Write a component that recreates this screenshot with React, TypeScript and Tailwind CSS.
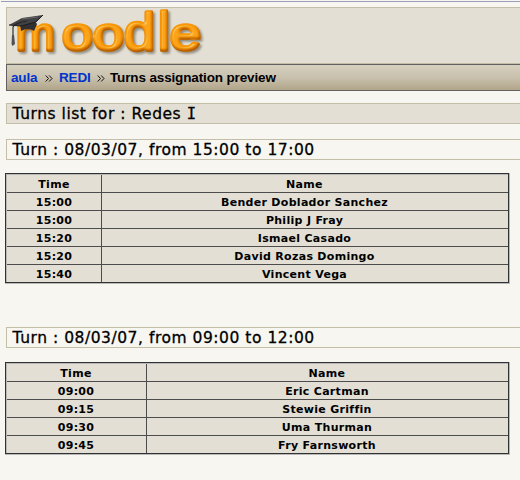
type Row = [string, string];

const firstTurn: Row[] = [
  ["15:00", "Bender Doblador Sanchez"],
  ["15:00", "Philip J Fray"],
  ["15:20", "Ismael Casado"],
  ["15:20", "David Rozas Domingo"],
  ["15:40", "Vincent Vega"],
];

const secondTurn: Row[] = [
  ["09:00", "Eric Cartman"],
  ["09:15", "Stewie Griffin"],
  ["09:30", "Uma Thurman"],
  ["09:45", "Fry Farnsworth"],
];

// Each letter: character, left x, width, font size
const letters: [string, number, number, number][] = [
  ["m", 9, 39, 46],
  ["o", 55, 31, 46],
  ["o", 86, 31, 46],
  ["d", 117, 31, 52],
  ["l", 151, 12, 53],
  ["e", 163, 31, 46],
];

function Logo() {
  return (
    <svg width="210" height="55" viewBox="0 0 210 55" className="block overflow-visible font-['Liberation_Sans',sans-serif]">
      <defs>
        <filter id="bevel" filterUnits="userSpaceOnUse" x="0" y="-4" width="210" height="62" colorInterpolationFilters="sRGB">
          <feGaussianBlur in="SourceAlpha" stdDeviation="1.2" result="blur" />
          <feOffset in="blur" dx="2" dy="2" result="drop" />
          <feFlood floodColor="#6f6b60" floodOpacity="0.7" />
          <feComposite in2="drop" operator="in" result="shadow" />
          <feOffset in="blur" dx="-1.3" dy="-1.6" result="up" />
          <feFlood floodColor="#a85400" floodOpacity="1" />
          <feComposite in2="up" operator="out" result="darkside" />
          <feComposite in="darkside" in2="SourceAlpha" operator="in" result="inner" />
          <feSpecularLighting in="blur" surfaceScale="3" specularConstant="0.75" specularExponent="22" lightingColor="#ffe08a" result="spec">
            <feDistantLight azimuth="225" elevation="48" />
          </feSpecularLighting>
          <feComposite in="spec" in2="SourceAlpha" operator="in" result="shine" />
          <feMerge>
            <feMergeNode in="shadow" />
            <feMergeNode in="SourceGraphic" />
            <feMergeNode in="inner" />
            <feMergeNode in="shine" />
          </feMerge>
        </filter>
      </defs>
      <g fill="#fb9806" stroke="#fb9806" strokeWidth="3.4" strokeLinejoin="round" filter="url(#bevel)">
        {letters.map(([c, x, w, size], i) => (
          <text key={i} x={x} y={42} fontSize={size} textLength={w} lengthAdjust="spacingAndGlyphs">
            {c}
          </text>
        ))}
      </g>
      <path d="M13 17 L14 23 Q21 19 27 23 L30 16 L27 12Z" fill="#303033" />
      <path d="M2 17 L15 10 L36 7 L29 14 L14 18Z" fill="#414144" />
      <path d="M2 17 L14 18 L29 14 L36 7" fill="none" stroke="#1d1d20" />
      <path d="M15 11 L31 9" stroke="#77777a" strokeWidth="0.7" />
      <path d="M20 13 Q8 15 6 19 V28" fill="none" stroke="#242426" strokeWidth="1.1" />
      <path d="M5 27 L4.5 36 L5.5 38 L8 36 L7 27Z" fill="#515155" />
    </svg>
  );
}

function Chevrons() {
  return (
    <svg width="8" height="7" viewBox="0 0 8 7" className="block" fill="none" stroke="#111111" strokeWidth="1">
      <path d="M0.7 0.5 L3.5 3.5 L0.7 6.5 M4.2 0.5 L7 3.5 L4.2 6.5" />
    </svg>
  );
}

function Heading({ children, filled = false }: { children: React.ReactNode; filled?: boolean }) {
  return (
    <h2
      className={`ml-[6px] h-[21px] border border-r-0 border-[#c4bda8] pl-[5.5px] text-[15.5px] leading-[20px] tracking-[0.53px] whitespace-nowrap [-webkit-text-stroke:0.3px_black] ${
        filled ? "bg-[#e3dfd4]" : ""
      }`}
    >
      {children}
    </h2>
  );
}

function TurnTable({ rows, wide = false }: { rows: Row[]; wide?: boolean }) {
  const all: Row[] = [["Time", "Name"], ...rows];
  return (
    <div className="ml-[5px] w-[505px] border-r border-b border-[#b9b8b7]">
      <div className="border border-[#303334]">
        <div className="border-t border-l border-[#b9b8b7] bg-[#e3dfd4] text-[11px] leading-[17px] font-bold">
          {all.map(([time, name], i) => (
            <div
              key={i}
              className={`grid text-center ${wide ? "grid-cols-[140px_1fr]" : "grid-cols-[95px_1fr]"} ${
                i > 0 ? "h-[18px] border-t border-[#4c4c4c]" : "h-[17px]"
              }`}
            >
              <div className={`h-[17px] border-r border-[#4c4c4c] pt-px tracking-[0.3px] ${wide ? "pr-px" : ""}`}>{time}</div>
              <div className="h-[17px] pt-px pr-[1px] tracking-[0.3px]">{name}</div>
            </div>
          ))}
        </div>
      </div>
    </div>
  );
}

export default function App() {
  return (
    <main className="h-[480px] w-[520px] overflow-hidden bg-[#f7f6f1] pt-px font-['DejaVu_Sans',sans-serif] text-black">
      <div className="ml-px h-px bg-[#9c9cbd]" />
      <header className="mt-[5px] ml-[6px] h-[57px] border border-r-0 border-[#c4bda8] bg-[#e3dfd4]">
        <Logo />
      </header>
      <nav className="ml-[6px] flex h-[27px] items-center border border-r-0 border-[#62615f] bg-linear-to-b from-[#d6d0c0] via-[#c9c1ae] to-[#b1a589] pt-[2px] pl-[4px] font-['Liberation_Sans',sans-serif] text-[13.5px] font-bold tracking-[-0.14px] whitespace-nowrap">
        <a className="w-[34px] text-[#0033cc]">aula</a>
        <Chevrons />
        <a className="ml-[6px] w-[38px] text-[#0033cc]">REDI</a>
        <Chevrons />
        <span className="ml-[5px]">Turns assignation preview</span>
      </nav>
      <div className="mt-[12px]">
        <Heading filled>
          Turns list for : Redes <span className="font-['DejaVu_Sans_Mono',monospace]">I</span>
        </Heading>
      </div>
      <section className="mt-[15px]">
        <Heading>Turn : 08/03/07, from 15:00 to 17:00</Heading>
        <div className="mt-[13px]">
          <TurnTable rows={firstTurn} />
        </div>
      </section>
      <section className="mt-[43px]">
        <Heading>Turn : 08/03/07, from 09:00 to 12:00</Heading>
        <div className="mt-[14px]">
          <TurnTable rows={secondTurn} wide />
        </div>
      </section>
    </main>
  );
}
